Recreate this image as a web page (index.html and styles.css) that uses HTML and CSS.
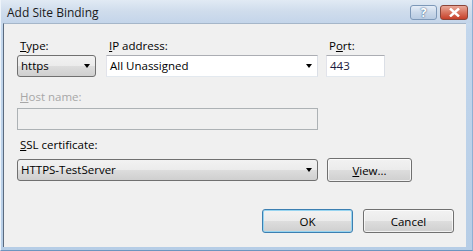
FILE: index.html
```html
<!DOCTYPE html>
<html lang="en">
<head>
    <meta charset="UTF-8">
    <title>Add Site Binding</title>
    <link rel="stylesheet" href="styles.css">
</head>
<body>
    <div class="window">
        <div class="titlebar">
            <span class="title">Add Site Binding</span>
            <div class="caption-buttons">
                <span class="cap-btn help">?</span>
                <span class="cap-btn close">
                    <svg width="11" height="9" viewBox="0 0 11 9">
                        <path d="M1 0.5 L10 8.5 M10 0.5 L1 8.5" stroke="#fff" stroke-width="2.4" fill="none"/>
                    </svg>
                </span>
            </div>
        </div>
        <div class="client">
            <div class="top-row">
                <div class="field">
                    <label><u>T</u>ype:</label>
                    <div class="combo list">https<span class="arrow"></span></div>
                </div>
                <div class="field">
                    <label><u>I</u>P address:</label>
                    <div class="combo edit">All Unassigned<span class="arrow"></span></div>
                </div>
                <div class="field">
                    <label>P<u>o</u>rt:</label>
                    <div class="textbox">443</div>
                </div>
            </div>

            <div class="field host-field">
                <label class="disabled"><u>H</u>ost name:</label>
                <div class="textbox disabled-box"></div>
            </div>

            <div class="field ssl-field">
                <label><u>S</u>SL certificate:</label>
                <div class="ssl-row">
                    <div class="combo list ssl-combo">HTTPS-TestServer<span class="arrow"></span></div>
                    <button class="btn view-btn"><u>V</u>iew...</button>
                </div>
            </div>

            <div class="footer">
                <button class="btn default">OK</button>
                <button class="btn">Cancel</button>
            </div>
        </div>
    </div>
</body>
</html>
```

FILE: styles.css
```css
body {
    margin: 0;
    padding: 0;
    background-color: #b9d1ea;
    font-family: "Segoe UI", "Open Sans", sans-serif;
    font-size: 11.5px;
    color: #000;
}
.window {
    width: 473px;
    height: 251px;
    box-sizing: border-box;
    display: flex;
    flex-direction: column;
    background: linear-gradient(#d7e4f2, #c2d6ec 12%, #b6cde6);
    border-left: 1px solid #eef4fa;
    border-right: 1px solid #8fb0d3;
    border-bottom: 1px solid #6e95bf;
}
.titlebar {
    height: 23px;
    display: flex;
    align-items: center;
    justify-content: space-between;
    padding: 0 4px 0 6px;
    background: linear-gradient(#e1eaf4, #cfdcec 50%, #c4d5ea);
}
.title {
    font-size: 12px;
    color: #1a1a1a;
    padding-top: 1px;
}
.caption-buttons {
    display: flex;
    gap: 3px;
    margin-top: 2px;
}
.cap-btn {
    width: 27px;
    height: 15px;
    display: flex;
    align-items: center;
    justify-content: center;
    border: 1px solid #7d98b8;
    border-radius: 3px;
    box-sizing: border-box;
}
.help {
    background: linear-gradient(#e6eef8, #cbd9ea 50%, #b8cbe2);
    color: #fff;
    font-weight: bold;
    font-size: 12px;
    text-shadow: 0 0 2px #4a6a92, 0 0 1px #4a6a92;
}
.close {
    width: 28px;
    border-color: #8a4438;
    background: linear-gradient(#e9a99a, #d8735e 50%, #c7402a);
}
.client {
    flex: 1;
    margin: 0 6px 3px 2px;
    border-left: 1px solid #5a6a7e;
    border-top: 1px solid #a5b6c9;
    background-color: #f0f0f0;
    padding: 14px 12px 0 13px;
    display: flex;
    flex-direction: column;
}
.field {
    display: flex;
    flex-direction: column;
}
label {
    height: 15px;
    line-height: 15px;
    padding-left: 3px;
    margin-bottom: 2px;
}
label.disabled {
    color: #a7a7a7;
}
.top-row {
    display: grid;
    grid-template-columns: 79px 212px 57px;
    column-gap: 10px;
}
.top-row .field:last-child {
    margin-left: -2px;
}
.combo {
    position: relative;
    height: 22px;
    box-sizing: border-box;
    line-height: 19px;
    padding-left: 3px;
    border: 1px solid #8e8f8f;
    border-radius: 2px;
    white-space: nowrap;
}
.combo.list {
    background: linear-gradient(#f2f2f2, #ebebeb 50%, #dddddd 51%, #cfcfcf);
    border-color: #707070;
    border-radius: 3px;
}
.combo.edit {
    background-color: #fff;
    border-color: #abadb3 #dbdfe6 #e3e9ef #e2e3ea;
    border-radius: 0;
}
.arrow {
    position: absolute;
    right: 5px;
    top: 8px;
    width: 0;
    height: 0;
    border-left: 3.5px solid transparent;
    border-right: 3.5px solid transparent;
    border-top: 4px solid #000;
}
.textbox {
    height: 22px;
    box-sizing: border-box;
    line-height: 19px;
    padding-left: 3px;
    background-color: #fff;
    border: 1px solid;
    border-color: #abadb3 #dbdfe6 #e3e9ef #e2e3ea;
    color: #1a1a40;
}
.disabled-box {
    width: 301px;
    background-color: #f0f0f0;
    border-color: #adb2b5;
}
.host-field {
    margin-top: 12px;
}
.host-field label {
    margin-bottom: 4px;
}
.ssl-field {
    margin-top: 7px;
}
.ssl-field label {
    margin-bottom: 6px;
}
.ssl-row {
    display: flex;
    gap: 9px;
    align-items: center;
}
.ssl-combo {
    width: 301px;
}
.btn {
    font-family: inherit;
    font-size: 11.5px;
    color: #000;
    height: 24px;
    padding: 0;
    border: 1px solid #707070;
    border-radius: 3px;
    background: linear-gradient(#f2f2f2, #ebebeb 50%, #dddddd 51%, #cfcfcf);
    box-shadow: inset 0 0 0 1px rgba(255, 255, 255, 0.7);
}
.view-btn {
    width: 85px;
    height: 24px;
}
.footer {
    display: flex;
    justify-content: flex-end;
    gap: 10px;
    margin-top: 27px;
}
.footer .btn {
    width: 91px;
}
.btn.default {
    border-color: #3c7fb1;
    box-shadow: inset 0 0 0 1px #97d4f0;
}
```
